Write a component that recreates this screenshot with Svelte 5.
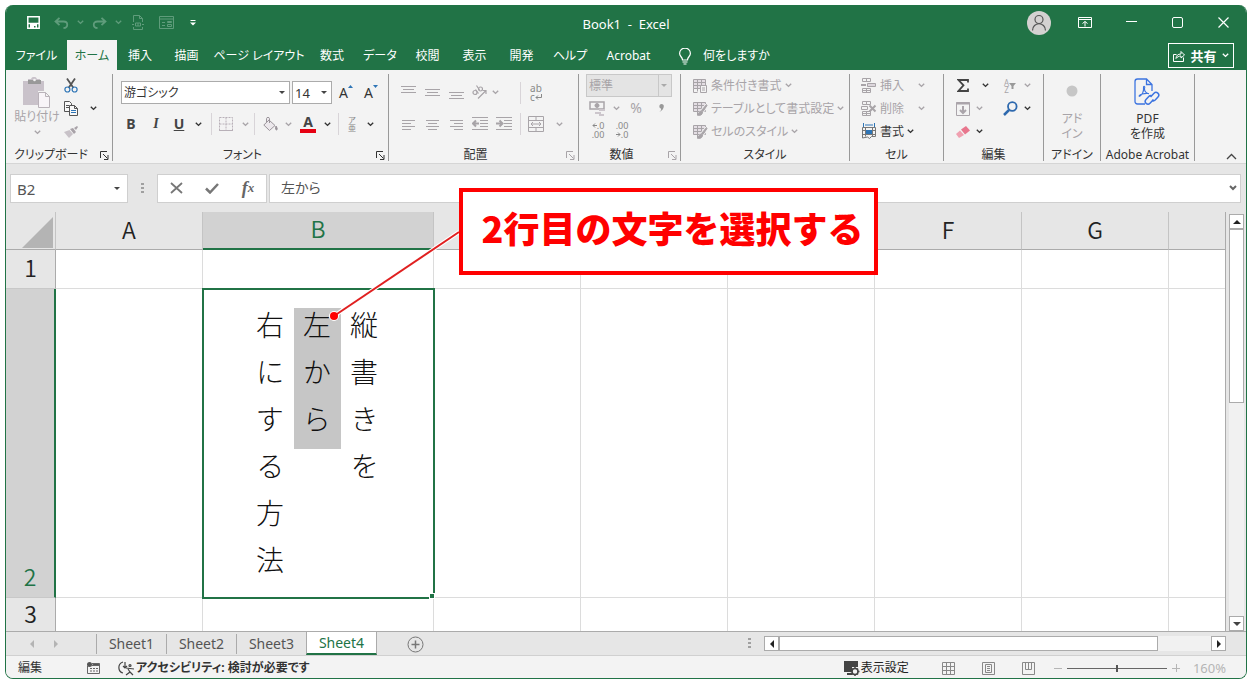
<script lang="ts">
	const tabs = [
		'ファイル',
		'ホーム',
		'挿入',
		'描画',
		'ページ レイアウト',
		'数式',
		'データ',
		'校閲',
		'表示',
		'開発',
		'ヘルプ',
		'Acrobat'
	];
	const activeTab = 'ホーム';

	// headings behind the callout stay empty
	const columns = [
		{ label: 'A', size: 'c-std' },
		{ label: 'B', size: 'c-wide' },
		{ label: '', size: 'c-std' },
		{ label: '', size: 'c-std' },
		{ label: '', size: 'c-std' },
		{ label: 'F', size: 'c-std' },
		{ label: 'G', size: 'c-std' },
		{ label: '', size: '' }
	];
	const rows = [1, 2, 3];

	// vertical text, first line on the right
	const lines = ['縦書きを', '左から', '右にする方法'];
	const selectedLine = 1;

	const sheets = ['Sheet1', 'Sheet2', 'Sheet3', 'Sheet4'];
	const activeSheet = 'Sheet4';

	let cellName = 'B2';
	let formula = '左から';
	let zoom = 50;
</script>

{#snippet chev()}
	<svg class="chev" width="7" height="5" viewBox="0 0 7 5"><path d="M.8.8 3.5 3.4 6.2.8" /></svg>
{/snippet}

{#snippet launcher()}
	<svg width="9" height="9" viewBox="0 0 9 9" fill="none" stroke="currentColor">
		<path d="M.5 7V.5H7M3 3l4.5 4.5M8 4v4.5H4" />
	</svg>
{/snippet}

{#snippet indent(right)}
	<svg width="16" height="14" viewBox="0 0 16 14" fill="none" stroke="currentColor">
		<path d="M0 .5h16M8 3.5h8M8 6.5h8M8 9.5h8M0 12.5h16" />
		{#if right}
			<path stroke-width="2" d="M0 6.5h6M3.5 3.5l3 3-3 3" />
		{:else}
			<path stroke-width="2" d="M1 6.5h6M4 3.5l-3 3 3 3" />
		{/if}
	</svg>
{/snippet}

{#snippet styleIcon(kind)}
	<svg width="16" height="16" viewBox="0 0 16 16" fill="none" stroke="currentColor">
		<path fill="#e4dee4" d="M1.5 1.5h12v9h-12z" />
		<path d="M1.5 4.5h12M1.5 7.5h12M5.5 1.5v12M9.5 1.5v9" />
		{#if kind === 'cond'}
			<path d="M1.5 10.5v4h4" />
			<path fill="#f3f3f3" d="M8.5 7.5h6v7h-6zM10 10h3M10 12h3" />
		{:else}
			<path stroke="#f3f3f3" stroke-width="4" d="M15 4 8 13" />
			<path fill="currentColor" d="m14.5 3.5-5 6 1.5 1 4-6zM9 10c-2 0-2 3-4 4 3 1 5.5 0 5.5-3z" />
		{/if}
	</svg>
{/snippet}

{#snippet cellIcon(kind)}
	<svg width="16" height="15" viewBox="0 0 16 15" fill="none" stroke="currentColor">
		<path d="M1.5.5h8v3h-8zM5.5.5v3M1.5 10.5h8v4h-8zM5.5 10.5v4M1.5 12.5h8" />
		{#if kind === 'insert'}
			<path d="M6.5 5.5h8v3h-8z" fill="#dcd6dc" />
			<path stroke-width="2" d="M0 7h5" />
		{:else}
			<path d="M.5 5.5h6v3h-6z" />
			<path stroke-width="2" d="m8.5 4.5 6 6m0-6-6 6" />
		{/if}
	</svg>
{/snippet}

<div class="window">
	<header class="titlebar">
		<div class="quick">
			<button aria-label="上書き保存">
				<svg width="13" height="13" viewBox="0 0 13 13" fill="none" stroke="#fff" stroke-width="1.5">
					<path d="M.8.8h11.4v11.4H.8zM.8 7.5h11.4" />
					<path fill="#fff" stroke="none" d="M3 8h7v5H8.5v-3H7v3H3z" />
				</svg>
			</button>
			<button class="dim" aria-label="元に戻す">
				<svg width="15" height="12" viewBox="0 0 15 12" fill="none" stroke="currentColor" stroke-width="1.8">
					<path d="M5.5.8 1.500 4.500l4 3.700M1.500 4.500h8c5 0 5 6.500 0 6.500" />
				</svg>
			</button>
			<button class="dim" aria-label="元に戻すの一覧">{@render chev()}</button>
			<button class="dim" aria-label="やり直し">
				<svg width="15" height="12" viewBox="0 0 15 12" fill="none" stroke="currentColor" stroke-width="1.8">
					<path d="m9.5.8 4 3.700-4 3.700M13.500 4.500h-8c-5 0-5 6.500 0 6.500" />
				</svg>
			</button>
			<button class="dim" aria-label="やり直しの一覧">{@render chev()}</button>
			<button class="dim" aria-label="印刷プレビュー">
				<svg width="12" height="15" viewBox="0 0 12 15" fill="none" stroke="currentColor">
					<path d="M1.5 7V.5h6l3 3V7M7.500.5v3h3M1.500 12v2.500h9V12M0 9.500h2M10 9.500h2M3.500 8h5v3h-5zM6 8v3" />
				</svg>
			</button>
			<button class="dim" aria-label="フォーム">
				<svg width="15" height="13" viewBox="0 0 15 13" fill="none" stroke="currentColor">
					<path d="M.5.5h14v12H.5zM.5 3h14M3 6.500h3M3 9.500h3M8.500 5.500h4v1h-4zM8.500 8.500h4v2h-4z" />
				</svg>
			</button>
			<button aria-label="クイック アクセス ツール バーのユーザー設定">
				<svg width="6" height="6" viewBox="0 0 6 6" fill="#fff"><path d="M.5 0h5v1h-5zM0 2.500h6L3 5.500z" /></svg>
			</button>
		</div>
		<h1>Book1&nbsp; -&nbsp; Excel</h1>
		<div class="controls">
			<button aria-label="アカウント">
				<svg width="24" height="24" viewBox="0 0 24 24" fill="none" stroke="#555" stroke-width="1.2">
					<circle cx="12" cy="12" r="12" fill="#d4d2d1" stroke="none" />
					<circle cx="12" cy="8.500" r="4" />
					<path d="M5.500 19.500c0-9 13-9 13 0" />
				</svg>
			</button>
			<button aria-label="リボンの表示オプション">
				<svg width="14" height="11" viewBox="0 0 14 11" fill="none" stroke="#fff">
					<path d="M.5.5h13v10H.5zM.5 2.500h13M7 9.500V4.500M4.500 6.500 7 4.500l2.500 2" />
				</svg>
			</button>
			<button aria-label="最小化">
				<svg width="11" height="11" viewBox="0 0 11 11" stroke="#fff"><path d="M0 4.500h11" /></svg>
			</button>
			<button aria-label="最大化">
				<svg width="11" height="11" viewBox="0 0 11 11" fill="none" stroke="#fff"><rect x=".5" y=".5" width="10" height="10" rx="1.5" /></svg>
			</button>
			<button aria-label="閉じる">
				<svg width="11" height="11" viewBox="0 0 11 11" stroke="#fff" stroke-width="1.2"><path d="m.5.5 10 10m0-10-10 10" /></svg>
			</button>
		</div>
	</header>

	<div class="tabbar">
		<nav>
			{#each tabs as tab}
				<button class="tab" class:active={tab === activeTab}>{tab}</button>
			{/each}
		</nav>
		<button class="tell-me">
			<svg width="12" height="17" viewBox="0 0 12 17" fill="none" stroke="#fff" stroke-width="1.2">
				<path d="M3.500 12c0-3-2.900-3.500-2.900-6.500a5.400 5.400 0 0 1 10.800 0c0 3-2.900 3.500-2.900 6.500zM3.500 14h5M4.500 16h3" />
			</svg>
			何をしますか
		</button>
		<button class="share">
			<svg width="12" height="12" viewBox="0 0 12 12" fill="none" stroke="#fff">
				<path d="M3.500 4.500h-3v7h10v-4M3 8.500c0-3 2-4.500 5-4.500V1.500L11.500 5 8 8V6C6 6 4 7 3 8.500z" />
			</svg>
			共有
			{@render chev()}
		</button>
	</div>

	<div class="ribbon">
		<section class="group clip">
			<div class="body">
				<button class="paste off">
					<svg width="30" height="32" viewBox="0 0 30 32">
						<path fill="#c9c2ca" d="M1 4h5V2h3c1-3 5-3 6 0h3v2h4v10h-6v14H1z" />
						<path fill="#999" d="M6 3h13v4H6z" />
						<circle cx="12.500" cy="3" r="1.300" fill="#f3f3f3" />
						<path fill="#f8f4f8" stroke="#b9b2b9" d="M16.500 15.500h7l4 4v11h-11zM23.500 15.500v4h4" />
					</svg>
					貼り付け
					{@render chev()}
				</button>
				<div class="clip-tools">
					<button aria-label="切り取り">
						<svg width="14" height="15" viewBox="0 0 14 15" fill="none">
							<path stroke="#555" stroke-width="1.8" d="m3 .5 6.500 9.500M11 .5 4.500 10" />
							<g stroke="#2e75b6" stroke-width="1.2"><circle cx="3.400" cy="11.500" r="2.500" /><circle cx="10.600" cy="11.500" r="2.500" /></g>
						</svg>
					</button>
					<span></span>
					<button aria-label="コピー">
						<svg width="14" height="15" viewBox="0 0 14 15" fill="#f8f8f8" stroke="#555">
							<path d="M.5.5h5l2 2v8h-7zM2 4.500h3M2 6.500h3" />
							<path d="M5.500 4.500h5l3 3v7h-8zM10.500 4.500v3h3" />
							<path stroke="#2e75b6" d="M7 9.500h5M7 11.500h5" />
						</svg>
					</button>
					<button aria-label="コピーのオプション">{@render chev()}</button>
					<button class="off" aria-label="書式のコピー">
						<svg width="14" height="12" viewBox="0 0 14 12"><path fill="#a8a2a8" d="m10 2 3-2 1 1-2 3zM6 3l3-1 3 4-2 2z" /><path fill="#c8c2c8" d="m0 6 5.500-2L9 8l-4 4z" /></svg>
					</button>
				</div>
			</div>
			<footer><span>クリップボード</span><button aria-label="クリップボードの詳細">{@render launcher()}</button></footer>
		</section>

		<section class="group font">
			<div class="body stack">
				<div class="row font-top">
					<label class="combo">
						<select aria-label="フォント"><option>游ゴシック</option></select><i></i>
					</label>
					<label class="combo">
						<select class="latin" aria-label="フォント サイズ"><option>14</option></select><i></i>
					</label>
					<button aria-label="フォント サイズの拡大" class="grow">A<svg width="5" height="3" viewBox="0 0 5 3"><path fill="#2e75b6" d="m0 3 2.500-3L5 3z" /></svg></button>
					<button aria-label="フォント サイズの縮小" class="grow">A<svg width="5" height="3" viewBox="0 0 5 3"><path fill="#2e75b6" d="m0 0 2.500 3L5 0z" /></svg></button>
				</div>
				<div class="row font-bottom">
					<button class="bold">B</button>
					<button class="italic">I</button>
					<button class="underline">U</button>
					<button aria-label="下線の種類">{@render chev()}</button>
					<hr />
					<button class="off" aria-label="罫線">
						<svg width="14" height="14" viewBox="0 0 14 14" fill="none" stroke="#b8b0b8"><path d="M.5.5h13v13H.5zM7 .5v13M.5 7h13" stroke-dasharray="2 1" /><path d="M0 13.500h14" /></svg>
					</button>
					<button class="off" aria-label="罫線の種類">{@render chev()}</button>
					<hr />
					<button class="off" aria-label="塗りつぶしの色">
						<svg width="15" height="15" viewBox="0 0 15 15" fill="none" stroke="#9a949a"><path fill="#ece8ec" d="m6 3 6 5.500-5.500 5L.8 8zM3.500 5V1.500c0-1.500 3-1.500 3 0V6" /><path fill="#9a949a" d="M13 9c2 3 1 4 .5 4s-1.500-1-.5-4z" /></svg>
					</button>
					<button class="off" aria-label="塗りつぶしの色の一覧">{@render chev()}</button>
					<button class="fontcolor">A</button>
					<button aria-label="フォントの色の一覧">{@render chev()}</button>
					<hr />
					<button class="ruby" aria-label="ふりがなの表示"><span>ア</span><span>亜</span></button>
					<button aria-label="ふりがなのオプション">{@render chev()}</button>
				</div>
			</div>
			<footer><span>フォント</span><button aria-label="フォントの詳細">{@render launcher()}</button></footer>
		</section>

		<section class="group align off">
			<div class="body stack">
				<div class="row align-row">
					<button aria-label="上揃え"><svg width="15" height="14" viewBox="0 0 15 14" stroke="currentColor"><path d="M0 .5h15M2 3.500h11M0 6.500h15" /></svg></button>
					<button aria-label="上下中央揃え"><svg width="15" height="14" viewBox="0 0 15 14" stroke="currentColor"><path d="M0 3.500h15M2 6.500h11M0 9.500h15" /></svg></button>
					<button aria-label="下揃え"><svg width="15" height="14" viewBox="0 0 15 14" stroke="currentColor"><path d="M0 6.500h15M2 9.500h11M0 12.500h15" /></svg></button>
					<button aria-label="方向">
						<svg width="16" height="15" viewBox="0 0 16 15" fill="none" stroke="currentColor" stroke-width="1.200">
							<circle cx="3" cy="7.500" r="2" /><path d="m3.500 4.500 3 4" /><circle cx="8.500" cy="4" r="2" /><path d="m4.500.5 3 4.500M6 13.500l8-8M10.500 5.500h3.500V9" />
						</svg>
					</button>
					<button class="near" aria-label="方向の一覧">{@render chev()}</button>
					<hr />
					<button class="wrap" aria-label="折り返して全体を表示する">
						<span>ab</span><span>c<svg width="7" height="6" viewBox="0 0 7 6" fill="none" stroke="currentColor"><path d="M6.500 0v3.500H1M3 1.500l-2 2 2 2" /></svg></span>
					</button>
				</div>
				<div class="row align-row">
					<button aria-label="左揃え"><svg width="13" height="11" viewBox="0 0 13 11" stroke="currentColor"><path d="M0 1.500h13M0 4.500h9M0 7.500h13M0 10.500h9" /></svg></button>
					<button aria-label="中央揃え"><svg width="13" height="11" viewBox="0 0 13 11" stroke="currentColor"><path d="M0 1.500h13M2 4.500h9M0 7.500h13M2 10.500h9" /></svg></button>
					<button aria-label="右揃え"><svg width="13" height="11" viewBox="0 0 13 11" stroke="currentColor"><path d="M0 1.500h13M4 4.500h9M0 7.500h13M4 10.500h9" /></svg></button>
					<button aria-label="インデントを減らす">{@render indent(false)}</button>
					<button aria-label="インデントを増やす">{@render indent(true)}</button>
					<hr />
					<button aria-label="セルを結合して中央揃え">
						<svg width="16" height="16" viewBox="0 0 16 16" fill="none" stroke="currentColor"><path d="M.5.5h15v15H.5zM.5 4.500h15M.5 11.500h15M8 .5v4M8 11.500v4M3 8h10M5 6 3 8l2 2M11 6l2 2-2 2" /></svg>
					</button>
					<button aria-label="セル結合のオプション">{@render chev()}</button>
				</div>
			</div>
			<footer><span>配置</span><button aria-label="配置の詳細">{@render launcher()}</button></footer>
		</section>

		<section class="group number off">
			<div class="body stack">
				<label class="combo disabled">
					<select aria-label="表示形式" disabled><option>標準</option></select><i></i>
				</label>
				<div class="row number-row">
					<button aria-label="通貨表示形式">
						<svg width="16" height="15" viewBox="0 0 16 15" fill="none" stroke="currentColor"><path stroke-width="1.5" d="M1 1h14v7H1z" /><circle cx="8" cy="4.500" r="2" fill="currentColor" /><path stroke="#ccc6cc" stroke-width="2" d="M10 9h6M6 12h6M10 14h5" /></svg>
					</button>
					<button aria-label="通貨の一覧">{@render chev()}</button>
					<button class="percent">%</button>
					<button aria-label="桁区切りスタイル"><svg width="5" height="8" viewBox="0 0 5 8"><path fill="#999" d="M2.500 0c4 0 2.500 6-2 8 1-1 2-2 1.500-3.500C-.5 4 0 0 2.500 0z" /></svg></button>
				</div>
				<div class="row decimals">
					<button aria-label="小数点以下の表示桁数を増やす"><span><svg width="5" height="5" viewBox="0 0 5 5" fill="none" stroke="currentColor"><path d="M5 2.500H1M3 .5l-2 2 2 2" /></svg>.0</span><span>.00</span></button>
					<button aria-label="小数点以下の表示桁数を減らす"><span>.00</span><span><svg width="5" height="5" viewBox="0 0 5 5" fill="none" stroke="currentColor"><path d="M0 2.500h4M2 .5l2 2-2 2" /></svg>.0</span></button>
				</div>
			</div>
			<footer><span>数値</span><button aria-label="数値の詳細">{@render launcher()}</button></footer>
		</section>

		<section class="group styles off">
			<div class="body list">
				<button>{@render styleIcon('cond')}条件付き書式{@render chev()}</button>
				<button>{@render styleIcon('table')}テーブルとして書式設定{@render chev()}</button>
				<button>{@render styleIcon('cell')}セルのスタイル{@render chev()}</button>
			</div>
			<footer><span>スタイル</span></footer>
		</section>

		<section class="group cells">
			<div class="body list">
				<button class="off wide">{@render cellIcon('insert')}<span>挿入</span>{@render chev()}</button>
				<button class="off wide">{@render cellIcon('delete')}<span>削除</span>{@render chev()}</button>
				<button>
					<svg width="16" height="17" viewBox="0 0 16 17" fill="none" stroke="#777">
						<path stroke="#2e75b6" d="M2.500 0v4M13.500 0v4M4 2h8" />
						<path d="M1.500 4.500h13v9h-4l-2 2-2-1.500-5 1zM1.500 7.500h13M1.500 11.500h13M4.500 4.500v9M11.500 4.500v9" />
						<path fill="#2e75b6" stroke="none" d="M5 7h6v4H5z" />
					</svg>書式{@render chev()}
				</button>
			</div>
			<footer><span>セル</span></footer>
		</section>

		<section class="group edit">
			<div class="body edit-grid">
				<button aria-label="合計"><svg width="12" height="13" viewBox="0 0 12 13" fill="none" stroke="#444" stroke-width="1.8"><path d="M11 3.500V1H1.500l5 5.300L1.500 12H11V9.500" /></svg></button>
				<button aria-label="合計の一覧">{@render chev()}</button>
				<button class="off" aria-label="並べ替えとフィルター"><span class="az"><b>A</b><b>Z</b></span><svg width="7" height="6" viewBox="0 0 7 6"><path fill="#999" d="M0 0h7L4.500 3v3h-2V3z" /></svg></button>
				<button class="off" aria-label="並べ替えの一覧">{@render chev()}</button>
				<button class="off" aria-label="フィル"><svg width="14" height="14" viewBox="0 0 14 14" fill="none" stroke="#aaa4aa"><path d="M.5.5h13v13H.5z" /><path stroke-width="2" d="M0 1.500h14M7 4v7M4 8l3 3 3-3" /></svg></button>
				<button class="off" aria-label="フィルの一覧">{@render chev()}</button>
				<button aria-label="検索と選択"><svg width="15" height="15" viewBox="0 0 15 15" fill="none" stroke="#2e69ae" stroke-width="1.8"><circle cx="9.300" cy="5.500" r="4.300" /><path stroke-width="2.5" d="M6 9 1 14" /></svg></button>
				<button aria-label="検索の一覧">{@render chev()}</button>
				<button aria-label="クリア"><svg width="14" height="12" viewBox="0 0 14 12"><path fill="#e8768d" d="m5 3.500 5-3.500 4 4.500-5 4z" /><path fill="#f0a0b0" d="M4 4.500 0 8l3 4 5-3z" /></svg></button>
				<button aria-label="クリアの一覧">{@render chev()}</button>
			</div>
			<footer><span>編集</span></footer>
		</section>

		<section class="group addin">
			<div class="body">
				<button class="tall off"><svg width="12" height="34" viewBox="0 0 12 34"><circle cx="6" cy="17" r="5.500" fill="#c6c6c6" /></svg><span>アド</span><span>イン</span></button>
			</div>
			<footer><span>アドイン</span></footer>
		</section>

		<section class="group acrobat">
			<div class="body">
				<button class="tall">
					<svg width="26" height="34" viewBox="0 0 26 34" fill="none" stroke="#3c74e0" stroke-width="1.3">
						<path d="M11 30H3.500c-1.500 0-2.500-1-2.500-2.500V7.500C1 6 2 5 3.500 5h9L18 10.500V17M12.500 5v5.500H18" />
						<path stroke-width="1.1" d="M5 22.500c3-1 5-5 4.500-9 0-2 2-1 1 1-.5 3 3 5.500 4.500 5M5 22.500c0-2 6-3.500 9-3" />
						<path stroke-width="1.5" d="m16.500 23 3.500-3.700a2.700 2.700 0 0 1 4 3.700l-2.800 3a2.700 2.700 0 0 1-3.500.3M19.500 25.500 16 29.200a2.700 2.700 0 0 1-4-3.700l2.800-3a2.700 2.700 0 0 1 3.500-.3" />
					</svg>
					<span>PDF</span><span>を作成</span>
				</button>
			</div>
			<footer><span>Adobe Acrobat</span></footer>
		</section>

		<button class="collapse" aria-label="リボンを折りたたむ">
			<svg width="11" height="7" viewBox="0 0 11 7" fill="none" stroke="#444" stroke-width="1.3"><path d="m1 6 4.500-4.500L10 6" /></svg>
		</button>
	</div>

	<div class="formulabar">
		<div class="namebox">
			<input aria-label="名前ボックス" bind:value={cellName} />
			<button aria-label="名前の一覧"><i class="tri down"></i></button>
		</div>
		<span class="grip"></span>
		<div class="fx">
			<button aria-label="キャンセル"><svg width="13" height="12" viewBox="0 0 13 12" fill="none" stroke="#777" stroke-width="1.8"><path d="m1 1 11 10M12 1 1 11" /></svg></button>
			<button aria-label="入力"><svg width="14" height="11" viewBox="0 0 14 11" fill="none" stroke="#777" stroke-width="2.5"><path d="m1 5.500 4 4 8-8.500" /></svg></button>
			<button class="fn" aria-label="関数の挿入">f<small>x</small></button>
		</div>
		<div class="formula">
			<input aria-label="数式バー" bind:value={formula} />
			<button aria-label="数式バーの展開">
				<svg width="8" height="6" viewBox="0 0 8 6" fill="none" stroke="#666" stroke-width="2"><path d="m1 1 3 3 3-3" /></svg>
			</button>
		</div>
	</div>

	<div class="sheet">
		<table>
			<colgroup>
				<col class="c-head" />
				{#each columns as column}
					<col class={column.size} />
				{/each}
			</colgroup>
			<thead>
				<tr>
					<th class="corner" aria-label="すべて選択"><svg width="31" height="31" viewBox="0 0 31 31"><path fill="#b4b4b4" d="M31 0v31H0z" /></svg></th>
					{#each columns as column}
						<th class:current={column.label === 'B'}>{column.label}</th>
					{/each}
				</tr>
			</thead>
			<tbody>
				{#each rows as row}
					<tr class="r{row}">
						<th class:current={row === 2}>{row}</th>
						{#each columns as column}
							{#if row === 2 && column.label === 'B'}
								<td class="selected">
									<div class="vertical">
										{#each lines as line, i}
											<div class="line" class:marked={i === selectedLine}>
												{#each line as ch}<span>{ch}</span>{/each}
											</div>
										{/each}
									</div>
									<i class="handle"></i>
								</td>
							{:else}
								<td></td>
							{/if}
						{/each}
					</tr>
				{/each}
			</tbody>
		</table>
		<div class="vscroll">
			<button aria-label="上へ"><i class="tri up"></i></button>
			<div class="thumb"></div>
			<div class="track"></div>
			<button aria-label="下へ"><i class="tri down"></i></button>
		</div>
	</div>

	<div class="sheetbar">
		<div class="sheetnav">
			<button aria-label="前のシート"><i class="tri left"></i></button>
			<button aria-label="次のシート"><i class="tri right"></i></button>
		</div>
		{#each sheets as sheet}
			<button class="sheettab" class:active={sheet === activeSheet}>{sheet}</button>
		{/each}
		<button class="add" aria-label="新しいシート">
			<svg width="17" height="17" viewBox="0 0 17 17" fill="none" stroke="#777"><circle cx="8.500" cy="8.500" r="7.500" /><path stroke-width="1.5" d="M4.500 8.500h8M8.500 4.500v8" /></svg>
		</button>
		<span class="grip"></span>
		<div class="hscroll">
			<button aria-label="左へ"><i class="tri left"></i></button>
			<div class="thumb"></div>
			<div class="track"></div>
			<button aria-label="右へ"><i class="tri right"></i></button>
		</div>
	</div>

	<footer class="status">
		<span>編集</span>
		<button class="macro" aria-label="マクロの記録">
			<svg width="13" height="12" viewBox="0 0 13 12" fill="none" stroke="#666"><path d="M.5 4v7.500h12v-10H5M5 3.500h8M3 6.500h2M6 6.500h2M9 6.500h2M3 9h2M6 9h2M9 9h2" /><circle cx="2.500" cy="2.500" r="2.500" fill="#555" stroke="none" /><path fill="#555" d="M6 1.500h6v2H6z" /></svg>
		</button>
		<button class="access">
			<svg width="17" height="15" viewBox="0 0 17 15" fill="none" stroke="#444" stroke-width="1.2"><path d="M5 1C-1 3 0 11 5 12M7 1v6M5 5l2 2 2-2M8 7l8 1M10 8l2 3-4 3M12 11l3 3" /><circle cx="12" cy="4.500" r="1" /></svg>
			アクセシビリティ: 検討が必要です
		</button>
		<button class="display">
			<svg width="17" height="15" viewBox="0 0 17 15"><path fill="#444" d="M1 0h14v6H9v5H1zM4 12h5v2H4z" /><circle cx="12" cy="10.500" r="3" fill="none" stroke="#444" stroke-width="1.5" /><path fill="none" stroke="#444" stroke-width="1.5" d="M12 6v2M12 13v2M7.500 10.500h2M14.500 10.500h2M9 7.500l1 1M15 13.500l-1-1M15 7.500l-1 1M9 13.500l1-1" /></svg>
			表示設定
		</button>
		<div class="views">
			<button aria-label="標準"><svg width="13" height="13" viewBox="0 0 13 13" fill="none" stroke="#888"><path d="M.5.5h12v12H.5zM4.500.5v12M8.500.5v12M.5 4.500h12M.5 8.500h12" /></svg></button>
			<button aria-label="ページ レイアウト"><svg width="13" height="13" viewBox="0 0 13 13" fill="none" stroke="#888"><path d="M.5.5h12v12H.5zM3.500 2.500h6v8h-6zM5 4.500h3M5 6.500h3M5 8.500h3" /></svg></button>
			<button aria-label="改ページ プレビュー"><svg width="13" height="13" viewBox="0 0 13 13" fill="none" stroke="#888"><path d="M.5.5h12v12H.5zM3.500.5v7h6v-7M6.500.5v7" /></svg></button>
		</div>
		<button class="sign" aria-label="縮小"><svg width="8" height="8" viewBox="0 0 8 8" stroke="#b5b5b5"><path d="M0 4.500h8" /></svg></button>
		<input type="range" aria-label="ズーム" bind:value={zoom} />
		<button class="sign" aria-label="拡大"><svg width="8" height="8" viewBox="0 0 8 8" stroke="#b5b5b5"><path d="M0 4.500h8M4.500 0v8" /></svg></button>
		<span class="zoom">160%</span>
	</footer>

	<svg class="leader" width="132" height="94" viewBox="0 0 132 94">
		<path stroke="#fff" stroke-width="4" d="M5 88 130 4" />
		<circle cx="5" cy="88" r="5" fill="#fff" />
		<path stroke="#e02020" stroke-width="2" d="M5 88 130 4" />
		<circle cx="5" cy="88" r="4" fill="#f00" />
	</svg>
	<p class="callout">2行目の文字を選択する</p>
</div>

<style>
	:global(body) {
		margin: 0;
		background: #fff;
	}

	.window {
		position: relative;
		display: flex;
		flex-direction: column;
		margin: 5px 8px 8px 5px;
		border: 1px solid #217346;
		border-top: 0;
		border-radius: 8px;
		overflow: hidden;
		background: #e6e6e6;
		color: #333;
		font-family: 'Noto Sans', 'Noto Sans CJK JP', sans-serif;
		font-feature-settings: 'palt';
		font-size: 12px;
		line-height: 16px;
	}

	button,
	input,
	select {
		margin: 0;
		padding: 0;
		border: 0;
		background: none;
		color: inherit;
		font: inherit;
		font-feature-settings: inherit;
		border-radius: 0;
		outline: 0;
		min-width: 0;
	}

	button {
		display: flex;
		align-items: center;
		justify-content: center;
		white-space: nowrap;
	}

	svg {
		flex: none;
		display: block;
	}

	.chev {
		fill: none;
		stroke: currentColor;
		stroke-width: 1.4;
	}

	.off {
		color: #a8a4a8;
	}

	.tri {
		border: 4px solid transparent;
	}

	.tri.down {
		border-top-color: #444;
		border-bottom: 0;
	}

	.tri.up {
		border-bottom-color: #222;
		border-top: 0;
	}

	.tri.left {
		border-right-color: #222;
		border-left: 0;
	}

	.tri.right {
		border-left-color: #222;
		border-right: 0;
	}

	/* title bar */
	.titlebar {
		display: grid;
		grid-template-columns: 1fr auto 1fr;
		align-items: center;
		height: 35px;
		background: #217346;
		color: #fff;
	}

	.quick {
		display: grid;
		grid-template-columns: 28px 28px 10px 28px 10px 30px 26px 28px;
		padding-left: 13px;
	}

	.dim {
		color: #5f9c7b;
	}

	h1 {
		margin: 0;
		padding-top: 2px;
		font-size: 13px;
		font-weight: 400;
	}

	.controls {
		display: grid;
		grid-template-columns: 46px 46px 46px 46px 46px;
		justify-content: end;
	}

	/* ribbon tabs */
	.tabbar {
		display: flex;
		height: 30px;
		background: #217346;
		color: #fff;
	}

	nav {
		display: grid;
		grid-template-columns: 61px 50px 46px 47px 98px 48px 48px 47px 47px 47px 50px 67px;
	}

	.tab,
	.tell-me {
		padding-top: 2px;
	}

	.tab.active {
		background: #f3f3f3;
		color: #217346;
	}

	.tell-me {
		gap: 12px;
		margin-left: 17px;
	}

	.share {
		box-sizing: border-box;
		gap: 5px;
		width: 66px;
		height: 25px;
		margin: 3px 12px 0 auto;
		border: 1px solid #fff;
		font-size: 13px;
		font-weight: 700;
	}

	/* ribbon */
	.ribbon {
		display: flex;
		height: 93px;
		background: #f3f3f3;
		border-bottom: 1px solid #d5d5d5;
	}

	.group {
		display: flex;
		flex-direction: column;
		box-sizing: border-box;
		flex: none;
		margin: 4px 0 2px;
		border-right: 1px solid #999;
	}

	.body {
		display: flex;
		flex: 1;
	}

	.stack {
		flex-direction: column;
	}

	.row {
		display: grid;
		align-items: center;
	}

	.group footer {
		display: flex;
		height: 12px;
		color: #333;
		line-height: 12px;
		white-space: nowrap;
	}

	.group footer span {
		flex: 1;
		text-align: center;
	}

	.group footer button {
		width: 16px;
	}

	.off footer button {
		color: #a8a4a8;
	}

	hr {
		width: 1px;
		height: 22px;
		margin: 0 auto;
		border: 0;
		background: #d8d4d8;
	}

	.clip {
		width: 107px;
	}

	.font {
		width: 276px;
	}

	.align {
		width: 190px;
	}

	.number {
		width: 102px;
	}

	.styles {
		width: 169px;
	}

	.cells {
		width: 94px;
	}

	.edit {
		width: 100px;
	}

	.addin {
		width: 57px;
	}

	.acrobat {
		width: 94px;
	}

	.paste {
		flex-direction: column;
		justify-content: flex-start;
		width: 44px;
		margin-left: 9px;
		padding-top: 3px;
	}

	.paste .chev {
		margin-top: 5px;
	}

	.clip-tools {
		display: grid;
		grid-template-columns: 23px 22px;
		grid-template-rows: 23px 23px 23px;
	}

	.font .body {
		padding-left: 8px;
	}

	.font-top {
		grid-template-columns: 169px 40px 24px 22px;
		column-gap: 2px;
		height: 37px;
	}

	.combo {
		position: relative;
		display: flex;
		height: 23px;
		border: 1px solid #ababab;
		background: #fff;
		box-sizing: border-box;
	}

	.combo select {
		appearance: none;
		flex: 1;
		width: 100%;
		padding: 0 2px;
		opacity: 1;
	}

	.combo .latin {
		font-size: 13px;
	}

	.combo i {
		position: absolute;
		right: 4px;
		top: 9px;
		border: 3px solid transparent;
		border-top-color: #444;
		border-bottom: 0;
	}

	.combo.disabled {
		width: 86px;
		margin-left: 7px;
		background: #e4e4e4;
		border-color: #c8c8c8;
	}

	.combo.disabled i {
		border-top-color: #aaa;
	}

	.combo.disabled::after {
		content: '';
		width: 12px;
		border-left: 1px solid #c8c8c8;
	}

	.grow {
		align-items: flex-start;
		font-size: 14px;
	}

	.font-bottom {
		grid-template-columns: 20px 30px 16px 22px 4px 26px 12px 6px 26px 10px 30px 8px 14px 14px 22px;
		height: 26px;
	}

	.bold,
	.italic,
	.underline,
	.fontcolor {
		color: #444;
		font-size: 14px;
		font-weight: 700;
	}

	.italic {
		font-family: 'Liberation Serif', serif;
		font-style: italic;
	}

	.underline {
		text-decoration: underline;
	}

	.fontcolor {
		height: 17px;
		width: 16px;
		margin: 0 auto;
		border-bottom: 4px solid #e60012;
		line-height: 12px;
	}

	.ruby {
		flex-direction: column;
		color: #888;
		font-size: 8px;
		line-height: 8px;
	}

	.align-row {
		grid-template-columns: 24px 24px 24px 24px 24px 8px 24px 22px;
		padding-left: 7px;
		height: 37px;
	}

	.align-row + .align-row {
		height: 26px;
	}

	.near {
		justify-self: start;
	}

	.wrap {
		flex-direction: column;
		font-size: 10px;
		line-height: 9px;
		color: #888;
	}

	.wrap span {
		display: flex;
		align-items: center;
	}

	.number-row {
		grid-template-columns: 34px 4px 36px 14px;
		height: 22px;
		padding-left: 1px;
	}

	.decimals {
		grid-template-columns: 24px 24px;
		justify-items: center;
		height: 22px;
		padding-left: 7px;
	}

	.percent {
		font-size: 14px;
	}

	.decimals button {
		flex-direction: column;
		align-items: flex-end;
		font-size: 9px;
		line-height: 9px;
		color: #888;
	}

	.decimals span {
		display: flex;
		align-items: center;
	}

	.list {
		flex-direction: column;
		align-items: flex-start;
		padding-left: 11px;
	}

	.list button {
		height: 23px;
		gap: 3px;
	}

	.wide span {
		width: 35px;
		text-align: left;
	}

	.edit-grid {
		display: grid;
		grid-template-columns: 28px 16px 34px 0;
		grid-template-rows: 23px 23px 23px;
		padding-left: 5px;
	}

	.edit-grid button:nth-child(6),
	.edit-grid button:nth-child(10) {
		margin-right: 12px;
	}

	.az {
		display: flex;
		flex-direction: column;
		font-size: 8px;
		line-height: 7px;
	}

	.az b {
		font-weight: 400;
	}

	.addin .body,
	.acrobat .body {
		justify-content: center;
	}

	.tall {
		flex-direction: column;
		justify-content: flex-start;
		line-height: 15px;
	}

	.tall svg + span {
		margin-top: 3px;
	}

	.collapse {
		margin: auto 8px 2px auto;
		width: 14px;
		height: 10px;
	}

	/* formula bar */
	.formulabar {
		display: flex;
		align-items: center;
		height: 48px;
		padding: 0 5px 0 4px;
	}

	.namebox,
	.fx,
	.formula {
		display: flex;
		box-sizing: border-box;
		height: 29px;
		border: 1px solid #cfcfcf;
		background: #fff;
	}

	.namebox {
		width: 118px;
	}

	.namebox input {
		flex: 1;
		padding: 2px 0 0 6px;
		color: #555;
		font-size: 15px;
	}

	.namebox button {
		width: 20px;
	}

	.namebox .tri {
		border-width: 3px 3px 0;
	}

	.grip {
		width: 3px;
		height: 11px;
		margin: 0 13px;
		background: repeating-linear-gradient(#a0a0a0 0 2px, transparent 2px 4px);
	}

	.fx {
		width: 110px;
	}

	.fx button {
		flex: 1;
	}

	.fx .fn {
		color: #666;
		font-family: 'Liberation Serif', serif;
		font-size: 18px;
		font-style: italic;
		font-weight: 700;
	}

	.fn small {
		font-size: 13px;
	}

	.formula {
		flex: 1;
		margin-left: 2px;
	}

	.formula input {
		flex: 1;
		padding-left: 11px;
		color: #555;
		font-size: 14px;
	}

	.formula button {
		width: 14px;
	}

	/* grid */
	.sheet {
		display: flex;
	}

	table {
		flex: 1;
		width: 0;
		table-layout: fixed;
		border-collapse: separate;
		border-spacing: 0;
		border-right: 1px solid #ababab;
		font-family: 'Noto Sans CJK JP', sans-serif;
	}

	.c-head {
		width: 50px;
	}

	.c-std {
		width: 147px;
	}

	.c-wide {
		width: 231px;
	}

	th,
	td {
		box-sizing: border-box;
		padding: 0;
	}

	th {
		padding-bottom: 4px;
		color: #222;
		font-size: 23px;
		font-weight: 350;
		line-height: 28px;
	}

	thead th {
		height: 38px;
		border-right: 1px solid #c4c4c4;
		border-bottom: 1px solid #ababab;
		background: #e6e6e6;
	}

	thead th:last-child {
		border-right: 0;
	}

	thead .current {
		border-bottom: 2px solid #217346;
		background: #d2d2d2;
		color: #217346;
	}

	.corner {
		padding: 0;
	}

	.corner svg {
		margin: 3px 2px 0 auto;
	}

	tbody th {
		border-right: 1px solid #ababab;
		border-bottom: 1px solid #c8c8c8;
		background: #e6e6e6;
	}

	tbody .current {
		border-right: 2px solid #217346;
		background: #d2d2d2;
		color: #217346;
		vertical-align: bottom;
		padding-bottom: 7px;
	}

	td {
		border-right: 1px solid #dcdcdc;
		border-bottom: 1px solid #dcdcdc;
		background: #fff;
	}

	td:last-child {
		border-right: 0;
	}

	.r1 {
		height: 39px;
	}

	.r2 {
		height: 309px;
	}

	.r3 {
		height: 33px;
	}

	.r3 th,
	.r3 td {
		border-bottom: 0;
	}

	.selected {
		position: relative;
		outline: 2px solid #217346;
		outline-offset: -1px;
		vertical-align: top;
	}

	.handle {
		position: absolute;
		right: -2px;
		bottom: -2px;
		width: 4px;
		height: 4px;
		border: 1px solid #fff;
		background: #217346;
	}

	.vertical {
		display: flex;
		flex-direction: row-reverse;
		justify-content: center;
		padding: 19px 2px 0 0;
		color: #111;
		font-size: 28px;
		font-weight: 300;
	}

	.line {
		align-self: flex-start;
		width: 47px;
	}

	.line span {
		display: block;
		height: 47px;
		line-height: 32px;
		text-align: center;
	}

	.marked {
		background: #c6c6c6;
	}

	.vscroll {
		display: flex;
		flex-direction: column;
		width: 15px;
		margin: 2px 2px 0 3px;
		background: #f1f1f1;
	}

	.vscroll button,
	.hscroll button,
	.thumb {
		box-sizing: border-box;
		border: 1px solid #ababab;
		background: #fff;
	}

	.vscroll button {
		height: 15px;
	}

	.vscroll .thumb {
		height: 174px;
	}

	.track {
		flex: 1;
	}

	/* sheet tabs */
	.sheetbar {
		display: flex;
		align-items: center;
		height: 25px;
		border-top: 1px solid #ababab;
		border-bottom: 1px solid #d0d0d0;
		box-sizing: border-box;
	}

	.sheetnav {
		display: flex;
		gap: 20px;
		width: 66px;
		padding-left: 24px;
		opacity: 0.25;
	}

	.sheettab {
		box-sizing: border-box;
		width: 70px;
		height: 20px;
		border-left: 1px solid #ababab;
		color: #555;
		font-size: 14px;
	}

	.sheettab.active {
		width: 71px;
		height: 23px;
		border-right: 1px solid #ababab;
		border-bottom: 2px solid #217346;
		background: #fff;
		color: #217346;
	}

	.add {
		margin: 2px auto 0 30px;
	}

	.hscroll {
		display: flex;
		width: 462px;
		height: 15px;
		margin-right: 20px;
		background: #f1f1f1;
	}

	.hscroll button {
		width: 15px;
	}

	.hscroll .thumb {
		width: 82%;
	}

	/* status bar */
	.status {
		display: flex;
		align-items: center;
		height: 20px;
		padding: 2px 20px 0 12px;
		background: #f3f3f3;
	}

	.macro {
		margin: 0 18px 0 45px;
	}

	.access {
		gap: 1px;
		font-weight: 700;
	}

	.display {
		gap: 1px;
		margin-left: auto;
		color: #222;
	}

	.views {
		display: flex;
		gap: 27px;
		margin: 0 19px 0 33px;
	}

	.sign {
		width: 8px;
	}

	.status input {
		appearance: none;
		width: 100px;
		height: 12px;
		margin: 0 5px;
		background: linear-gradient(#666, #666) center / 100% 1px no-repeat;
	}

	.status input::-webkit-slider-thumb {
		appearance: none;
		width: 2px;
		height: 7px;
		background: #555;
	}

	.zoom {
		margin-left: 13px;
		color: #b5b5b5;
		font-size: 13px;
	}

	/* annotation over the sheet */
	.leader {
		position: absolute;
		left: 323px;
		top: 223px;
	}

	.callout {
		position: absolute;
		left: 453px;
		top: 183px;
		box-sizing: border-box;
		width: 419px;
		height: 87px;
		margin: 0;
		padding-left: 8px;
		border: 4px solid #f00;
		background: #fff;
		color: #f00;
		font-family: 'Noto Sans CJK JP', sans-serif;
		font-feature-settings: normal;
		font-size: 36px;
		font-weight: 900;
		line-height: 70px;
		text-align: center;
		white-space: nowrap;
	}
</style>
